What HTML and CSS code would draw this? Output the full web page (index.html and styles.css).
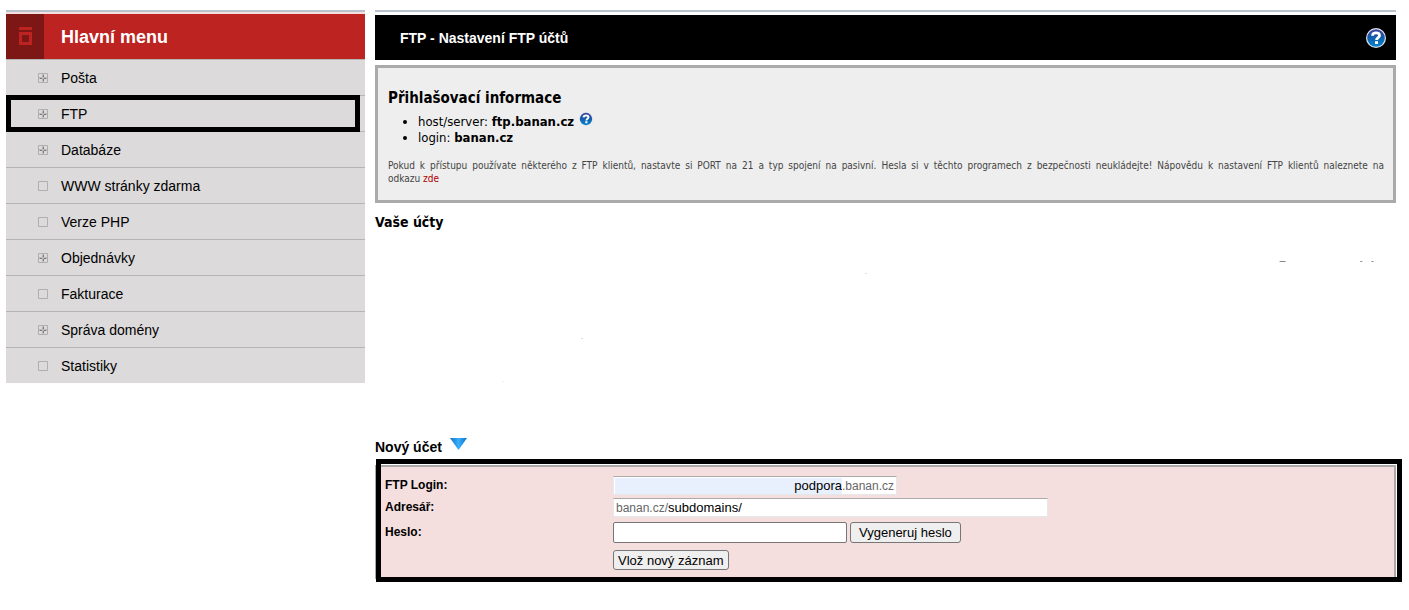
FILE: index.html
```html
<!DOCTYPE html>
<html lang="cs">
<head>
<meta charset="utf-8">
<title>FTP - Nastavení FTP účtů</title>
<link rel="stylesheet" href="styles.css">
</head>
<body>
<svg class="symbols" width="0" height="0" aria-hidden="true">
  <defs>
    <linearGradient id="help-fill" x1="0" y1="0" x2="0" y2="1">
      <stop offset="0" stop-color="#3f3f9c"/><stop offset=".5" stop-color="#0f5fac"/><stop offset="1" stop-color="#0a86cf"/>
    </linearGradient>
    <linearGradient id="arrow-fill" x1="0" y1="0" x2="1" y2="0">
      <stop offset="0" stop-color="#1c6fc4"/><stop offset=".5" stop-color="#35b0fb"/><stop offset="1" stop-color="#0d6ed0"/>
    </linearGradient>
    <symbol id="help" viewBox="0 0 20 20">
      <circle cx="10" cy="10" r="10" fill="#dfe6ee"/>
      <circle cx="10" cy="10" r="8.8" fill="url(#help-fill)"/>
      <path d="M6.500 7.700C6.600 5.700 8 4.900 10.100 4.900s3.400.9 3.400 2.600c0 2.100-3 2.100-3 4.500" fill="none" stroke="#fff" stroke-width="2.800"/>
      <rect x="9" y="13.200" width="3" height="2.800" fill="#fff"/>
    </symbol>
    <symbol id="plus" viewBox="0 0 10 10">
      <path d="M.5.5h9v9h-9z" fill="none" stroke="#b0afaf"/>
      <path d="M5 1v8M1 5h8" stroke="#bab9b9" stroke-width="2"/>
      <path d="M2 5h2v1H2zM6 5h2v1H6zM5 2h1v2H5zM5 6h1v2H5z" fill="#7c7b7b"/>
    </symbol>
    <symbol id="box" viewBox="0 0 10 10">
      <path d="M.5.5h9v9h-9z" fill="none" stroke="#b0afaf"/>
    </symbol>
  </defs>
</svg>
<div class="page">
  <nav class="sidebar">
    <h2 class="menu-title">
      <span class="menu-mark"><svg width="13" height="18" viewBox="0 0 13 18" aria-hidden="true"><path d="M0 0h13v3H0z" fill="#bd2320"/><path d="M1.500 6.500h10v10h-10z" fill="none" stroke="#bd2320" stroke-width="3"/></svg></span>
      <span class="menu-name">Hlavní menu</span>
    </h2>
    <ul class="menu">
      <li><a href="#"><svg class="tick"><use href="#plus"/></svg>Pošta</a></li>
      <li class="marked"><a href="#"><svg class="tick"><use href="#plus"/></svg>FTP</a></li>
      <li><a href="#"><svg class="tick"><use href="#plus"/></svg>Databáze</a></li>
      <li><a href="#"><svg class="tick"><use href="#box"/></svg>WWW stránky zdarma</a></li>
      <li><a href="#"><svg class="tick"><use href="#box"/></svg>Verze PHP</a></li>
      <li><a href="#"><svg class="tick"><use href="#plus"/></svg>Objednávky</a></li>
      <li><a href="#"><svg class="tick"><use href="#box"/></svg>Fakturace</a></li>
      <li><a href="#"><svg class="tick"><use href="#plus"/></svg>Správa domény</a></li>
      <li><a href="#"><svg class="tick"><use href="#box"/></svg>Statistiky</a></li>
    </ul>
  </nav>
  <main class="content">
    <header class="title-bar">
      <h1>FTP - Nastavení FTP účtů</h1>
      <a href="#" aria-label="Nápověda"><svg class="help-large"><use href="#help"/></svg></a>
    </header>
    <section class="info">
      <h2>Přihlašovací informace</h2>
      <ul>
        <li>host/server: <b>ftp.banan.cz</b> <a href="#" aria-label="Nápověda"><svg class="help-small"><use href="#help"/></svg></a></li>
        <li>login: <b>banan.cz</b></li>
      </ul>
      <p><span class="justified">Pokud k přístupu používate některého z FTP klientů, nastavte si PORT na 21 a typ spojení na pasivní. Hesla si v těchto programech z bezpečnosti neukládejte! Nápovědu k nastavení FTP klientů naleznete na</span> odkazu <a href="#">zde</a></p>
    </section>
    <section class="accounts">
      <h2>Vaše účty</h2>
      <svg class="residue" aria-hidden="true">
        <g fill="#888">
          <rect x="88.600%" y="29" width="6" height="1"/>
          <rect x="96.500%" y="29" width="2" height="1"/>
          <rect x="97.600%" y="29" width="2" height="1"/>
        </g>
        <g fill="#ddd">
          <rect x="48%" y="41" width="2" height="1"/>
          <rect x="20.200%" y="106" width="2" height="1"/>
          <rect x="12.500%" y="149" width="1" height="1"/>
        </g>
      </svg>
    </section>
    <section class="new-account">
      <h2>Nový účet <svg width="17" height="12" viewBox="0 0 17 12" aria-hidden="true"><path d="M0 0h17L8.500 12z" fill="url(#arrow-fill)"/></svg></h2>
      <form class="form">
        <label class="name" for="login">FTP Login:</label>
        <div class="field field-login"><input id="login" type="text" value="podpora"><span>.banan.cz</span></div>
        <label class="name" for="dir">Adresář:</label>
        <div class="field field-dir"><span>banan.cz/</span><input id="dir" type="text" value="subdomains/"></div>
        <label class="name" for="password">Heslo:</label>
        <div class="controls"><input class="password" id="password" type="password"><button type="button">Vygeneruj heslo</button></div>
        <div class="controls submit"><button type="submit">Vlož nový záznam</button></div>
      </form>
    </section>
  </main>
</div>
</body>
</html>
```
FILE: styles.css
```css
* { box-sizing: border-box; }
body {
  margin: 0;
  background: #fff;
  color: #000;
  font-family: "Liberation Sans", Arial, sans-serif;
}
h1, h2, ul, p { margin: 0; padding: 0; }
svg { display: block; }
a { text-decoration: none; }
.symbols { position: absolute; }

.page {
  display: flex;
  align-items: flex-start;
  gap: 10px;
  padding: 10px 13px 24px 6px;
}

.sidebar {
  flex: 0 0 359px;
  border-top: 2px solid #b9c1cd;
}
.menu-title {
  display: flex;
  height: 47px;
  border-top: 2px solid #f5dfde;
  background: #bd2320;
  color: #fff;
  font-size: 18px;
  line-height: 46px;
}
.menu-mark {
  width: 38px;
  padding: 13px 0 0 13px;
  background: #7d1715;
}
.menu-name { padding-left: 17px; }
.menu { list-style: none; background: #dcdada; }
.menu li {
  position: relative;
  border-top: 1px solid #b5b4b4;
}
.menu a {
  display: flex;
  align-items: center;
  gap: 13px;
  height: 35px;
  padding: 1px 0 0 32px;
  color: #000;
  font-size: 14px;
}
.tick { width: 10px; height: 10px; }
.menu .marked { z-index: 1; }
.marked::after {
  content: "";
  position: absolute;
  inset: -1px 5px -1px 0;
  border: 5px solid #000;
}

.content {
  flex: 1;
  min-width: 0;
  border-top: 2px solid #b9c1cd;
}
.title-bar {
  display: flex;
  align-items: center;
  justify-content: space-between;
  height: 45px;
  margin-top: 3px;
  padding: 0 10px 0 25px;
  background: #000;
  color: #fff;
}
.title-bar h1 { font-size: 14px; line-height: 20px; }
.help-large { width: 20px; height: 20px; }

.info {
  margin-top: 5px;
  padding: 20px 9px 15px 10px;
  border: 3px solid #aaa;
  background: #eee;
  font-family: "DejaVu Sans Condensed", Tahoma, sans-serif;
}
.info h2 { font-size: 15px; line-height: 20px; }
.info ul { margin-top: 6px; padding-left: 30px; font-size: 13px; line-height: 16px; }
.info li a {
  display: inline-block;
  height: 14px;
  margin-top: -2px;
  vertical-align: top;
}
.info p {
  margin-top: 13px;
  color: #444;
  font-size: 10px;
  line-height: 13px;
}
.justified { display: block; text-align: justify; text-align-last: justify; }
.info p a { color: #b00000; }
.help-small { width: 14px; height: 14px; margin-left: 1px; }

.accounts { height: 226px; padding-top: 9px; }
.accounts h2 {
  font-family: "DejaVu Sans Condensed", Tahoma, sans-serif;
  font-size: 14px;
  line-height: 20px;
}
.residue { width: 100%; height: 180px; }

.new-account h2 {
  display: flex;
  gap: 8px;
  padding: 8px 0;
  font-size: 14px;
  line-height: 20px;
}
.new-account h2 svg { margin-top: 1px; }
.form {
  position: relative;
  display: grid;
  grid-template-columns: 228px minmax(0, 1fr);
  padding: 9px 8px 7px;
  border: 2px solid #aaa;
  background: #f4dfde;
  font-size: 13px;
}
.form::after {
  content: "";
  position: absolute;
  inset: -8px -8px -5px -1px;
  border: 5px solid #000;
  pointer-events: none;
}
.name { font-size: 12px; font-weight: bold; line-height: 18px; }
.field {
  display: flex;
  align-items: center;
  height: 19px;
  margin-bottom: 3px;
  padding: 0 2px;
  border: 1px solid #e3e8ea;
  border-top-color: #aaa;
  background: #fff;
  color: #666;
}
.field span { font-size: 12px; }
.field input {
  flex: 1;
  min-width: 0;
  height: 16px;
  padding: 0;
  border: 0;
  background: transparent;
  font: inherit;
  color: #000;
}
.field-login { width: 284px; padding-left: 1px; }
.field-login input { background: #e8f0fe; text-align: right; }
.field-dir { width: 435px; max-width: 100%; }
.controls { display: flex; gap: 3px; margin-top: 2px; }
.password {
  width: 234px;
  height: 21px;
  padding: 1px 2px;
  border: 1px solid #767676;
  border-radius: 2px;
  background: #fff;
  font: inherit;
}
label[for="password"] { padding-top: 3px; }
.controls button {
  height: 21px;
  padding: 0 8px;
  border: 1px solid #767676;
  border-radius: 3px;
  background: #efefef;
  color: #000;
  font: inherit;
}
.submit { grid-column: 2; margin-top: 7px; }
.submit button { height: 20px; padding: 0 4px; }
```
